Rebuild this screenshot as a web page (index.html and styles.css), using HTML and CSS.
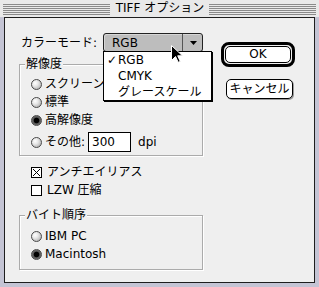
FILE: index.html
```html
<!DOCTYPE html>
<html lang="ja">
<head>
<meta charset="utf-8">
<title>TIFF オプション</title>
<link rel="stylesheet" href="styles.css">
</head>
<body>
<div class="window">
  <div class="titlebar">
    <div class="stripes"></div>
    <div class="title">TIFF オプション</div>
    <div class="stripes"></div>
  </div>
  <div class="content">
    <div class="left">
      <div class="mode-row">
        <span class="mode-label">カラーモード:</span>
        <div class="popup">
          <span class="popup-value">RGB</span>
          <span class="popup-arrow"><svg width="7" height="4" viewBox="0 0 7 4"><path d="M0 0H7L3.5 4Z" fill="#000"/></svg></span>
          <ul class="menu">
            <li><span class="check">✓</span>RGB</li>
            <li>CMYK</li>
            <li>グレースケール</li>
          </ul>
          <svg class="cursor" width="12" height="18" viewBox="0 0 12 18"><path d="M0.5 0.5V15.5L4.5 11.5L7.2 17.3L9.3 16.4L6.7 10.8H11.5Z" fill="#000" stroke="#fff" stroke-width="1"/></svg>
        </div>
      </div>

      <div class="group res">
        <div class="group-title">解像度</div>
        <div class="opt"><span class="radio"></span>スクリーン</div>
        <div class="opt"><span class="radio"></span>標準</div>
        <div class="opt"><span class="radio on"></span>高解像度</div>
        <div class="opt other"><span class="radio"></span>その他:<span class="field">300</span><span class="unit">dpi</span></div>
      </div>

      <div class="check-row first"><span class="box"><svg width="9" height="9" viewBox="0 0 9 9"><path d="M1 1L8 8M8 1L1 8" stroke="#000" stroke-width="1"/></svg></span>アンチエイリアス</div>
      <div class="check-row"><span class="box"></span>LZW 圧縮</div>

      <div class="group order">
        <div class="group-title">バイト順序</div>
        <div class="opt"><span class="radio"></span>IBM PC</div>
        <div class="opt"><span class="radio on"></span>Macintosh</div>
      </div>
    </div>

    <div class="right">
      <div class="default-ring"><button class="btn ok">OK</button></div>
      <button class="btn cancel">キャンセル</button>
    </div>
  </div>
</div>
</body>
</html>
```

FILE: styles.css
```css
* { box-sizing: border-box; }

body {
  margin: 0;
  background: #c4c4d4;
  font-family: "DejaVu Sans", "Noto Sans CJK JP", sans-serif;
  font-weight: 400;
  font-size: 12px;
  line-height: 14px;
  color: #000;
}

.window {
  width: 319px;
  height: 287px;
  display: flex;
  flex-direction: column;
  background: #c4c4d4;
}

.titlebar {
  height: 17px;
  flex: none;
  display: flex;
  padding: 0 3px;
  background: #e9e9e9;
}

.stripes {
  flex: 1;
  height: 11px;
  margin-top: 4px;
  background: repeating-linear-gradient(to bottom, #8a8a8a 0 1px, #e9e9e9 1px 2px);
}

.title {
  line-height: 17px;
  padding: 0 5px 0 6px;
  white-space: nowrap;
}

.content {
  flex: 1;
  margin: 0 4px 4px 4px;
  border: 1px solid #1e1e1e;
  background: #efefef;
  display: grid;
  grid-template-columns: 184px 74px;
  column-gap: 18px;
  align-items: start;
  padding: 15px 0 0 14px;
}

/* mode row */
.mode-row {
  display: flex;
  align-items: center;
  height: 19px;
}

.mode-label {
  width: 84px;
  padding-left: 2px;
  white-space: nowrap;
}

.popup {
  position: relative;
  width: 100px;
  height: 19px;
  border: 1px solid #222;
  border-radius: 3px;
  background: #bdbdbd;
  box-shadow: inset 1px 1px 0 #d6d6d6;
  display: flex;
  align-items: center;
  z-index: 2;
}

.popup-value {
  flex: 1;
  padding-left: 8px;
}

.popup-arrow {
  width: 20px;
  height: 17px;
  border-left: 1px solid #555;
  display: flex;
  align-items: center;
  justify-content: center;
}

.popup-arrow svg { display: block; margin-left: 1px; }

.menu {
  position: absolute;
  left: -1px;
  top: 17px;
  width: 109px;
  margin: 0;
  padding: 0;
  list-style: none;
  background: #fff;
  border: 1px solid #000;
  box-shadow: 1px 1px 0 #000;
}

.menu li {
  height: 16px;
  line-height: 16px;
  padding-left: 14px;
  position: relative;
  white-space: nowrap;
}

.check {
  position: absolute;
  left: 3px;
  top: 0;
}

.cursor {
  position: absolute;
  left: 67px;
  top: 11px;
}

/* group boxes */
.group {
  border: 1px solid #ababab;
  box-shadow: 1px 1px 0 #fff, inset 1px 1px 0 #fff;
  padding-left: 11px;
}

.group-title {
  width: fit-content;
  margin: -8px 0 0 -6px;
  padding: 0 1px;
  background: #efefef;
  line-height: 14px;
}

.res {
  margin-top: 12px;
  padding-bottom: 3px;
}

.res .group-title { margin-bottom: 4px; }

.order {
  margin-top: 16px;
  padding-bottom: 6px;
}

.order .group-title { margin-bottom: 5px; }

.opt {
  height: 18px;
  display: flex;
  align-items: center;
  white-space: nowrap;
}

.opt.other {
  height: 20px;
  margin-top: 3px;
}

.radio {
  width: 11px;
  height: 11px;
  flex: none;
  margin-right: 3px;
  border-radius: 50%;
  border: 1px solid #4a4a4a;
  background: radial-gradient(circle at 35% 35%, #ffffff 0, #e8e8e8 35%, #a0a0a0 100%);
}

.radio.on {
  background: radial-gradient(circle at 50% 50%, #000 0 2.4px, #555 3.2px, #8a8a8a 100%);
}

.field {
  width: 43px;
  height: 20px;
  margin-left: 3px;
  border: 1px solid #000;
  background: #fff;
  padding-left: 3px;
  line-height: 18px;
}

.unit { margin-left: 7px; }

.check-row {
  height: 18px;
  display: flex;
  align-items: center;
  padding-left: 12px;
  white-space: nowrap;
}

.check-row.first { margin-top: 7px; }

.box {
  width: 11px;
  height: 11px;
  flex: none;
  margin-right: 5px;
  border: 1px solid #000;
  background: #fff;
  display: flex;
  align-items: center;
  justify-content: center;
}

.box svg { display: block; }

/* buttons */
.right {
  display: flex;
  flex-direction: column;
  align-items: flex-start;
}

.default-ring {
  margin-top: 9px;
  width: 74px;
  height: 25px;
  border: 3px solid #000;
  border-radius: 8px;
  padding: 1px;
  background: #efefef;
}

.btn {
  font: inherit;
  color: #000;
  margin: 0;
  padding: 0;
  background: #fff;
  border: 1px solid #000;
  border-radius: 5px;
}

.ok {
  width: 100%;
  height: 100%;
  line-height: 15px;
}

.cancel {
  margin: 12px 0 0 5px;
  width: 67px;
  height: 20px;
  box-shadow: 1px 1px 0 #9a9a9a;
}
```
